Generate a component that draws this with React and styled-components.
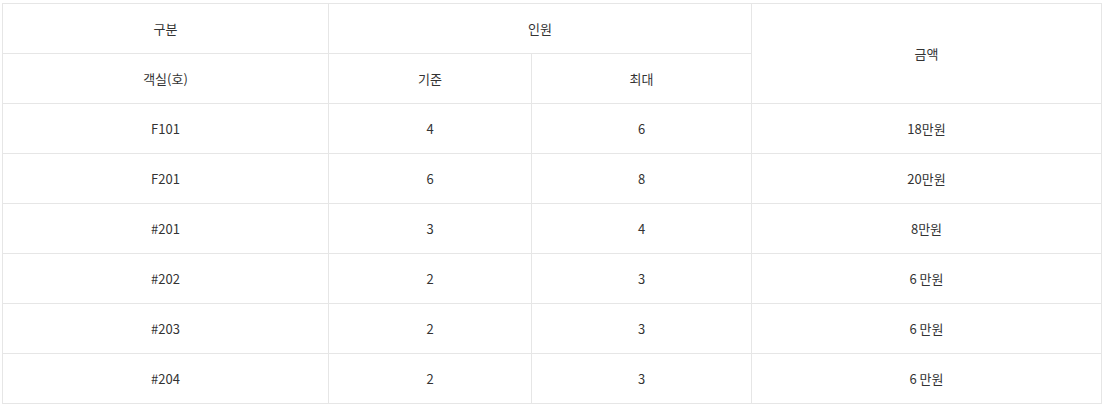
import styled, { createGlobalStyle } from "styled-components";

const GlobalStyle = createGlobalStyle`
  body {
    margin: 0;
    background: #fff;
    font-family: "Noto Sans CJK KR", "Noto Sans", sans-serif;
  }
`;

const ROOMS = [
  { name: "F101", base: 4, max: 6, price: "18만원" },
  { name: "F201", base: 6, max: 8, price: "20만원" },
  { name: "#201", base: 3, max: 4, price: "8만원" },
  { name: "#202", base: 2, max: 3, price: "6 만원" },
  { name: "#203", base: 2, max: 3, price: "6 만원" },
  { name: "#204", base: 2, max: 3, price: "6 만원" },
];

export default function App() {
  return (
    <Wrap>
      <GlobalStyle />
      <Table>
        <colgroup>
          <col style={{ width: 326 }} />
          <col style={{ width: 203 }} />
          <col style={{ width: 220 }} />
          <col />
        </colgroup>
        <thead>
          <tr>
            <Th>구분</Th>
            <Th colSpan={2}>인원</Th>
            <Th rowSpan={2}>금액</Th>
          </tr>
          <tr>
            <Th>객실(호)</Th>
            <Th>기준</Th>
            <Th>최대</Th>
          </tr>
        </thead>
        <tbody>
          {ROOMS.map((r) => (
            <tr key={r.name}>
              <Td>{r.name}</Td>
              <Td>{r.base}</Td>
              <Td>{r.max}</Td>
              <Td>{r.price}</Td>
            </tr>
          ))}
        </tbody>
      </Table>
    </Wrap>
  );
}

const Wrap = styled.div`
  padding: 3px 4px 0 2px;
`;

const Table = styled.table`
  width: 1100px;
  border-collapse: collapse;
  table-layout: fixed;
  color: #333;
  font-size: 13px;
`;

const Th = styled.th`
  height: 49px;
  padding: 0;
  border: 1px solid #e6e6e6;
  font-weight: 400;
  text-align: center;
  vertical-align: middle;
`;

const Td = styled.td`
  height: 49px;
  padding: 0;
  border: 1px solid #e6e6e6;
  text-align: center;
  vertical-align: middle;
`;
